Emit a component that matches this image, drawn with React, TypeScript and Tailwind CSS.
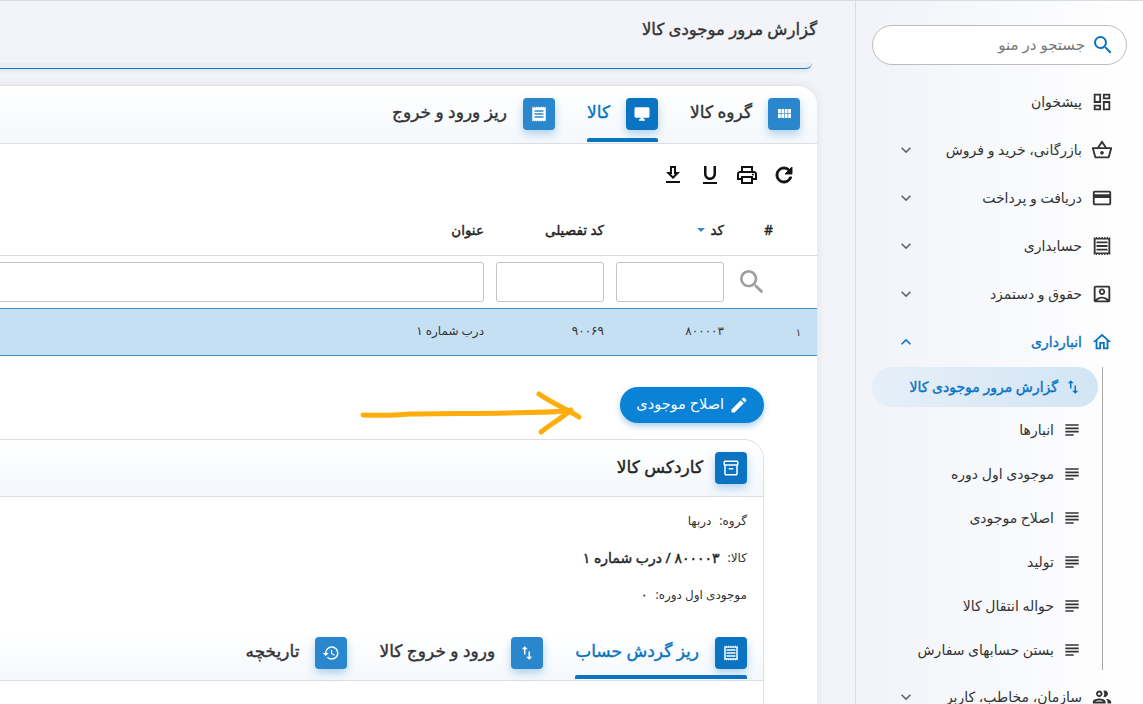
import React from "react";
import {
  MdOutlineDashboard, MdOutlineShoppingBasket, MdOutlineCreditCard, MdOutlineReceipt, MdOutlineAccountBox, MdOutlineHome,
  MdSwapVert, MdSubject, MdDesktopWindows, MdOutlinePrint, MdFormatUnderlined, MdOutlineGetApp,
  MdOutlineInventory2, MdHistory, MdEdit, MdOutlinePeople, MdSearch, MdExpandMore, MdExpandLess, MdReceipt,
} from "react-icons/md";

const FONT = "font-['Noto_Sans','DejaVu_Sans',sans-serif]";
const SEMI = "[-webkit-text-stroke:0.4px]";

function NavItem({ icon, label, chevron }: { icon: React.ReactNode; label: string; chevron?: "down" | "up" }) {
  const active = chevron === "up";
  return (
    <div className={`h-12 flex items-center pr-[29px] pl-[40px] ${active ? "text-[#0a74c2]" : "text-[#333]"}`}>
      <span className={`w-6 h-6 flex items-center justify-center text-[22px] ${active ? "text-[#0a74c2]" : "text-[#333]"}`}>{icon}</span>
      <span className={`mr-[8px] pb-[2px] text-[14px] whitespace-nowrap ${active ? SEMI : ""}`}>{label}</span>
      <span className="flex-1" />
      {chevron === "down" && <MdExpandMore className="text-[20px] text-[#666]" />}
      {chevron === "up" && <MdExpandLess className="text-[20px] text-[#0a74c2]" />}
    </div>
  );
}

function SubItem({ label }: { label: string }) {
  return (
    <div className="h-11 flex items-center pr-[20px] text-[#333]">
      <MdSubject className="text-[20px] text-[#333] shrink-0" />
      <span className="mr-[8px] pb-[2px] text-[14px] whitespace-nowrap">{label}</span>
    </div>
  );
}

function GridGlyph() {
  return (
    <svg width="13" height="9" viewBox="0 0 13 9" fill="currentColor">
      {[0, 3.4, 6.8, 10.2].map((x) =>
        [0, 4.8].map((y) => <rect key={`${x}-${y}`} x={x} y={y} width="2.8" height="4.2" />)
      )}
    </svg>
  );
}

function RefreshGlyph() {
  return (
    <svg width="24" height="24" viewBox="0 0 24 24" fill="currentColor" stroke="currentColor" strokeWidth="0.9">
      <path d="M17.65 6.35C16.2 4.9 14.21 4 12 4c-4.42 0-7.99 3.58-7.99 8s3.57 8 7.99 8c3.73 0 6.84-2.55 7.73-6h-2.08c-.82 2.33-3.04 4-5.65 4-3.31 0-6-2.69-6-6s2.69-6 6-6c1.66 0 3.14.69 4.22 1.78L13 11h7V4l-2.35 2.35z" />
    </svg>
  );
}

function Tab({ icon, label, active, dark, nested }: { icon: React.ReactNode; label: string; active?: boolean; dark?: boolean; nested?: boolean }) {
  return (
    <div className={`relative h-full flex items-center ${nested ? "pb-[10px]" : "pb-[2px]"}`}>
      <span className={`w-8 h-8 rounded-[4px] flex items-center justify-center text-white text-[18px] shadow-[0_4px_8px_rgba(10,116,194,0.3)] ${dark ? "bg-[#0a74c2]" : "bg-[#2b87cd]"}`}>{icon}</span>
      <span className={`mr-[16px] pb-[3px] text-[17px] whitespace-nowrap ${SEMI} ${active ? "text-[#0a74c2]" : "text-[#333]"}`}>{label}</span>
      {active && <span className="absolute bottom-[1px] inset-x-0 h-[4px] rounded-t-[2px] bg-[#0a74c2]" />}
    </div>
  );
}

function Arrow() {
  return (
    <svg className="absolute right-[217px] top-[14px]" width="260" height="80" viewBox="340 370 260 80" fill="none" stroke="#ffad0d" strokeWidth="5" strokeLinecap="round" strokeLinejoin="round">
      <path d="M363 415C380 416 392 415 410 414C450 413 520 414 570 411" />
      <path d="M539 394C550 402 565 408 579 417" />
      <path d="M541 432C550 425 560 419 571 410" />
    </svg>
  );
}

export default function App() {
  return (
    <div dir="rtl" className={`${FONT} h-screen w-full flex overflow-hidden border-t border-[#d8dbe2] bg-[#f3f4f9]`}>
      <aside className="w-[288px] shrink-0 h-full border-l border-[#d8dbe2] bg-gradient-to-r from-[#f1f3f9] to-white">
        <div className="mt-[24px] mx-[16px] h-10 rounded-full border border-[#bdbdbd] bg-white flex items-center pr-[11px]">
          <MdSearch className="text-[24px] text-[#0a74c2]" />
          <span className="mr-[6px] pb-[2px] text-[15px] text-[#777]">جستجو در منو</span>
        </div>
        <div className="mt-[13px]">
          <NavItem icon={<MdOutlineDashboard />} label="پیشخوان" />
          <NavItem icon={<MdOutlineShoppingBasket />} label="بازرگانی، خرید و فروش" chevron="down" />
          <NavItem icon={<MdOutlineCreditCard />} label="دریافت و پرداخت" chevron="down" />
          <NavItem icon={<MdOutlineReceipt />} label="حسابداری" chevron="down" />
          <NavItem icon={<MdOutlineAccountBox />} label="حقوق و دستمزد" chevron="down" />
          <NavItem icon={<MdOutlineHome />} label="انبارداری" chevron="up" />
        </div>
        <div className="mr-[40px] border-r border-[#a8a8a8] h-[303px] mt-[1px]">
          <div className="h-10 mr-[4px] w-[226px] mb-[1px] rounded-full bg-gradient-to-l from-[#d3e5f4] to-[#e6eff8] flex items-center pr-[16px] text-[#0a74c2]">
            <MdSwapVert className="text-[18px] shrink-0" />
            <span className={`mr-[6px] pb-[2px] text-[14px] whitespace-nowrap ${SEMI}`}>گزارش مرور موجودی کالا</span>
          </div>
          <SubItem label="انبارها" />
          <SubItem label="موجودی اول دوره" />
          <SubItem label="اصلاح موجودی" />
          <SubItem label="تولید" />
          <SubItem label="حواله انتقال کالا" />
          <SubItem label="بستن حسابهای سفارش" />
        </div>
        <div className="mt-[3px]">
          <NavItem icon={<MdOutlinePeople />} label="سازمان، مخاطب، کاربر" chevron="down" />
        </div>
      </aside>

      <main className="flex-1 min-w-0 h-full overflow-hidden pr-[38px]">
        <div className={`h-[62px] flex items-center text-[16.5px] text-[#333] pb-[5px] ${SEMI}`}>گزارش مرور موجودی کالا</div>
        <div className="h-[6px] w-[1000px] mr-[5px] bg-[#e8edf8] border-b border-[#1f78b4] rounded-br-[16px] shadow-[0_2px_4px_rgba(31,120,180,0.12)]" />
        <div className="mt-[16px] w-[1000px] h-[660px] bg-white rounded-tr-[20px] shadow-[0_0_10px_rgba(0,0,0,0.08)] border-t border-[#e4e4e4]">
          <div className="h-[58px] border-b border-[#dedede] bg-gradient-to-b from-white to-[#f4f8fc] rounded-tr-[20px] pr-[17px] flex gap-[32px] items-center">
            <Tab icon={<GridGlyph />} label="گروه کالا" />
            <Tab icon={<MdDesktopWindows />} label="کالا" active dark />
            <Tab icon={<MdReceipt />} label="ریز ورود و خروج" />
          </div>
          <div className="h-[62px] flex items-center pr-[21px] gap-[13px] text-[#111]">
            <RefreshGlyph />
            <MdOutlinePrint className="text-[24px]" />
            <MdFormatUnderlined className="text-[24px]" />
            <MdOutlineGetApp className="text-[24px]" />
          </div>
          <div className={`h-[50px] flex items-center border-b border-[#dcdcdc] text-[13.5px] text-[#222] pr-[44px] pb-[1px] ${SEMI}`}>
            <span className="w-[49px]">#</span>
            <span className="w-[108px] ml-3 flex items-center">کد <span className="mr-[5px] w-0 h-0 border-x-[4px] border-x-transparent border-t-[4px] border-t-[#3b87c7]" /></span>
            <span className="w-[108px] ml-3">کد تفصیلی</span>
            <span className="w-[108px]">عنوان</span>
          </div>
          <div className="h-[52px] flex items-center">
            <span className="w-[93px] flex items-center pr-[49px]"><MdSearch className="text-[32px] text-[#9e9e9e] shrink-0" /></span>
            <span className="w-[108px] h-10 ml-3 rounded-[3px] border border-[#c4c4c4] bg-white" />
            <span className="w-[108px] h-10 ml-3 rounded-[3px] border border-[#c4c4c4] bg-white" />
            <span className="w-[500px] h-10 rounded-[3px] border border-[#c4c4c4] bg-white" />
          </div>
          <div className="h-[48px] flex items-center bg-[#c5dff3] border-y border-[#4a8fc9] text-[12px] text-[#333] pb-[3px]">
            <span className="w-[93px] pr-[16px] text-[10px] pt-[3px]">۱</span>
            <span className="w-[108px] ml-3">۸۰۰۰۰۳</span>
            <span className="w-[108px] ml-3">۹۰۰۶۹</span>
            <span className="w-[200px]">درب شماره ۱</span>
          </div>
          <div className="relative h-[83px] pr-[53px] pt-[31px]">
            <Arrow />
            <div className="w-36 h-9 rounded-full bg-[#0a82d5] shadow-[0_3px_6px_rgba(10,116,194,0.35)] text-white flex items-center pr-[15px] text-[14.5px] whitespace-nowrap">
              <MdEdit className="text-[20px] shrink-0" />
              <span className="mr-[5px] pb-[2px]">اصلاح موجودی</span>
            </div>
          </div>
          <div className="mr-[53px] w-[900px] h-[300px] rounded-tr-[20px] border border-[#dedede] bg-white">
            <div className="h-[57px] border-b border-[#dedede] bg-gradient-to-b from-white to-[#f4f8fc] rounded-tr-[20px] pr-[16px] flex items-center">
              <span className="w-8 h-8 rounded-[4px] flex items-center justify-center text-white text-[18px] bg-[#0a74c2] shadow-[0_4px_8px_rgba(10,116,194,0.3)]"><MdOutlineInventory2 /></span>
              <span className={`mr-[12px] pb-[3px] text-[17px] text-[#222] ${SEMI}`}>کاردکس کالا</span>
            </div>
            <div className="pr-[16px] pt-[5px] h-[138px] text-[12px] text-[#333]">
              <div className="h-[37px] flex items-center"><span>گروه:</span><span className="mr-[8px]">دربها</span></div>
              <div className="h-[37px] flex items-center"><span>کالا:</span><span className={`mr-[8px] text-[14px] text-[#222] ${SEMI}`}>۸۰۰۰۰۳ / درب شماره ۱</span></div>
              <div className="h-[37px] flex items-center"><span>موجودی اول دوره:</span><span className={`mr-[8px] ${SEMI}`}>۰</span></div>
            </div>
            <div className="h-[46px] border-b border-[#dedede] bg-gradient-to-b from-white to-[#f4f8fc] pr-[16px] flex items-center gap-[32px]">
              <Tab nested icon={<MdOutlineReceipt />} label="ریز گردش حساب" active dark />
              <Tab nested icon={<MdSwapVert />} label="ورود و خروج کالا" />
              <Tab nested icon={<MdHistory />} label="تاریخچه" />
            </div>
          </div>
        </div>
      </main>
    </div>
  );
}
